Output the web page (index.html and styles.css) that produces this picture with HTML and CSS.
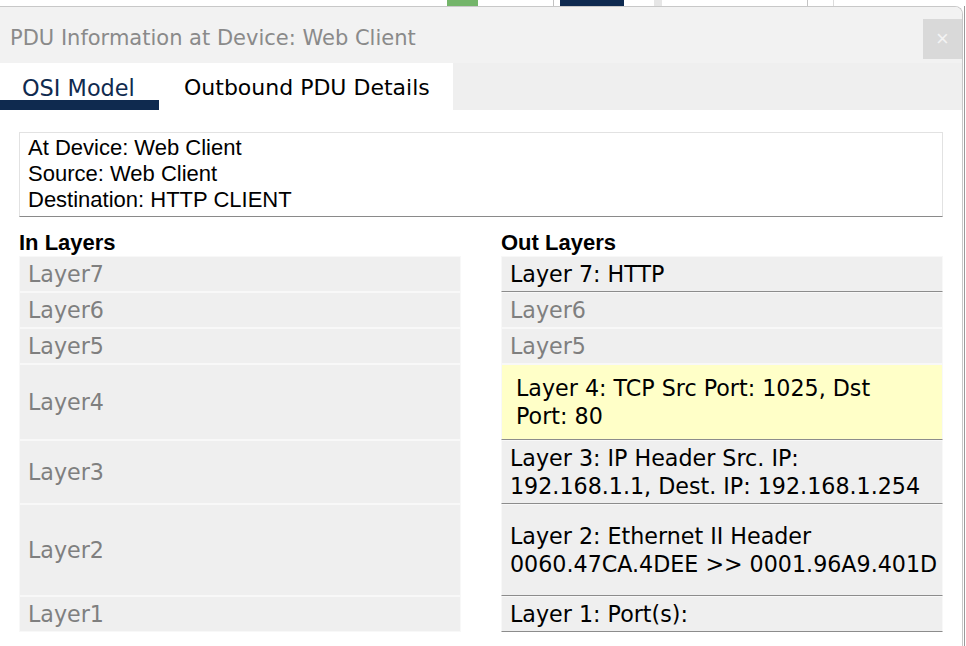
FILE: index.html
```html
<!DOCTYPE html>
<html>
<head>
<meta charset="utf-8">
<title>PDU Information</title>
<link rel="stylesheet" href="styles.css">
</head>
<body>
<div class="strip">
  <span class="s-green"></span>
  <span class="s-line"></span>
  <span class="s-navy"></span>
  <span class="s-gray"></span>
  <span class="s-line2"></span>
  <span class="s-line3"></span>
</div>
<div class="main">
  <div class="dialog">
    <div class="titlebar">
      <div class="title">PDU Information at Device: Web Client</div>
      <div class="close">×</div>
    </div>
    <div class="tabs">
      <div class="tab active">OSI Model</div>
      <div class="tab">Outbound PDU Details</div>
      <div class="tab-rest"></div>
    </div>
    <div class="content">
      <div class="details">
        <div>At Device: Web Client</div>
        <div>Source: Web Client</div>
        <div>Destination: HTTP CLIENT</div>
      </div>
      <div class="layers">
        <div class="head">In Layers</div>
        <div class="head">Out Layers</div>

        <div class="cell">Layer7</div>
        <div class="cell on">Layer 7: HTTP</div>

        <div class="cell">Layer6</div>
        <div class="cell">Layer6</div>

        <div class="cell">Layer5</div>
        <div class="cell">Layer5</div>

        <div class="cell">Layer4</div>
        <div class="cell on hl">Layer 4: TCP Src Port: 1025, Dst<br>Port: 80</div>

        <div class="cell">Layer3</div>
        <div class="cell on">Layer 3: IP Header Src. IP:<br>192.168.1.1, Dest. IP: 192.168.1.254</div>

        <div class="cell">Layer2</div>
        <div class="cell on">Layer 2: Ethernet II Header<br>0060.47CA.4DEE &gt;&gt; 0001.96A9.401D</div>

        <div class="cell">Layer1</div>
        <div class="cell on">Layer 1: Port(s):</div>
      </div>
    </div>
  </div>
  <div class="edge"></div>
</div>
</body>
</html>
```
FILE: styles.css
```css
html, body {
  margin: 0;
  padding: 0;
  background: #ffffff;
  overflow: hidden;
}

body {
  width: 966px;
  height: 646px;
}

.strip {
  height: 6px;
  display: flex;
  align-items: stretch;
}

.s-green {
  width: 31px;
  margin-left: 447px;
  background: #74b56a;
}

.s-line {
  width: 1px;
  margin-left: 75px;
  background: #c2c2c2;
}

.s-navy {
  width: 64px;
  margin-left: 6px;
  background: #0e2a50;
}

.s-gray {
  width: 8px;
  margin-left: 30px;
  background: #e6e6e6;
}

.s-line2 {
  width: 1px;
  margin-left: 145px;
  background: #c4c4c4;
}

.s-line3 {
  width: 1px;
  margin-left: 25px;
  background: #dcdcdc;
}

.main {
  display: flex;
}

.dialog {
  width: 962px;
  height: 640px;
  border-top: 1px solid #c8c8c8;
  border-right: 1px solid #c8c8c8;
  border-top-right-radius: 8px;
  background: #ffffff;
  font-family: "DejaVu Sans", Verdana, sans-serif;
  overflow: hidden;
}

.edge {
  width: 1px;
  margin-left: 1px;
  background: #9a9a9a;
}

.titlebar {
  height: 56px;
  background: #f2f2f2;
  display: flex;
  justify-content: space-between;
  align-items: flex-start;
}

.title {
  font-size: 21px;
  color: #8a8a8a;
  padding: 18px 0 0 10px;
  line-height: 26px;
  white-space: nowrap;
}

.close {
  width: 39px;
  height: 40px;
  margin-top: 12px;
  background: #d9d9d9;
  color: #f3f3f3;
  font-size: 22px;
  line-height: 40px;
  text-align: center;
  font-family: "Liberation Sans", Arial, sans-serif;
}

.tabs {
  height: 47px;
  display: flex;
}

.tab {
  box-sizing: border-box;
  height: 47px;
  padding: 13px 23px 0 25px;
  font-size: 22px;
  line-height: 24px;
  color: #000000;
  white-space: nowrap;
}

.tab.active {
  width: 159px;
  padding-left: 22px;
  padding-right: 0;
  font-size: 22.4px;
  color: #0f2a4f;
  border-bottom: 10px solid #0f2a4f;
}

.tab-rest {
  flex: 1;
  background: #efefef;
}

.content {
  padding: 22px 0 0 19px;
}

.details {
  box-sizing: border-box;
  width: 924px;
  height: 85px;
  padding: 2px 8px 0 8px;
  border: 1px solid #e2e2e2;
  border-bottom-color: #8a8a8a;
  font-family: "Liberation Sans", Arial, sans-serif;
  font-size: 22px;
  line-height: 26px;
  color: #000000;
}

.layers {
  margin-top: 13px;
  display: grid;
  grid-template-columns: 442px 442px;
  grid-template-rows: 26px 36px 36px 36px 76px 64px 92px 36px;
  column-gap: 40px;
}

.head {
  font-family: "Liberation Sans", Arial, sans-serif;
  font-weight: bold;
  font-size: 22px;
  line-height: 26px;
  color: #000000;
}

.cell {
  box-sizing: border-box;
  display: flex;
  align-items: center;
  padding: 0 4px 0 8px;
  background: #efefef;
  border: 1px solid #f8f8f8;
  color: #7f7f7f;
  font-size: 22.2px;
  line-height: 28px;
  white-space: nowrap;
}

.cell.on {
  color: #000000;
  border-bottom-color: #8c8c8c;
}

.cell.hl {
  background: #ffffc8;
  padding-left: 14px;
}
```
